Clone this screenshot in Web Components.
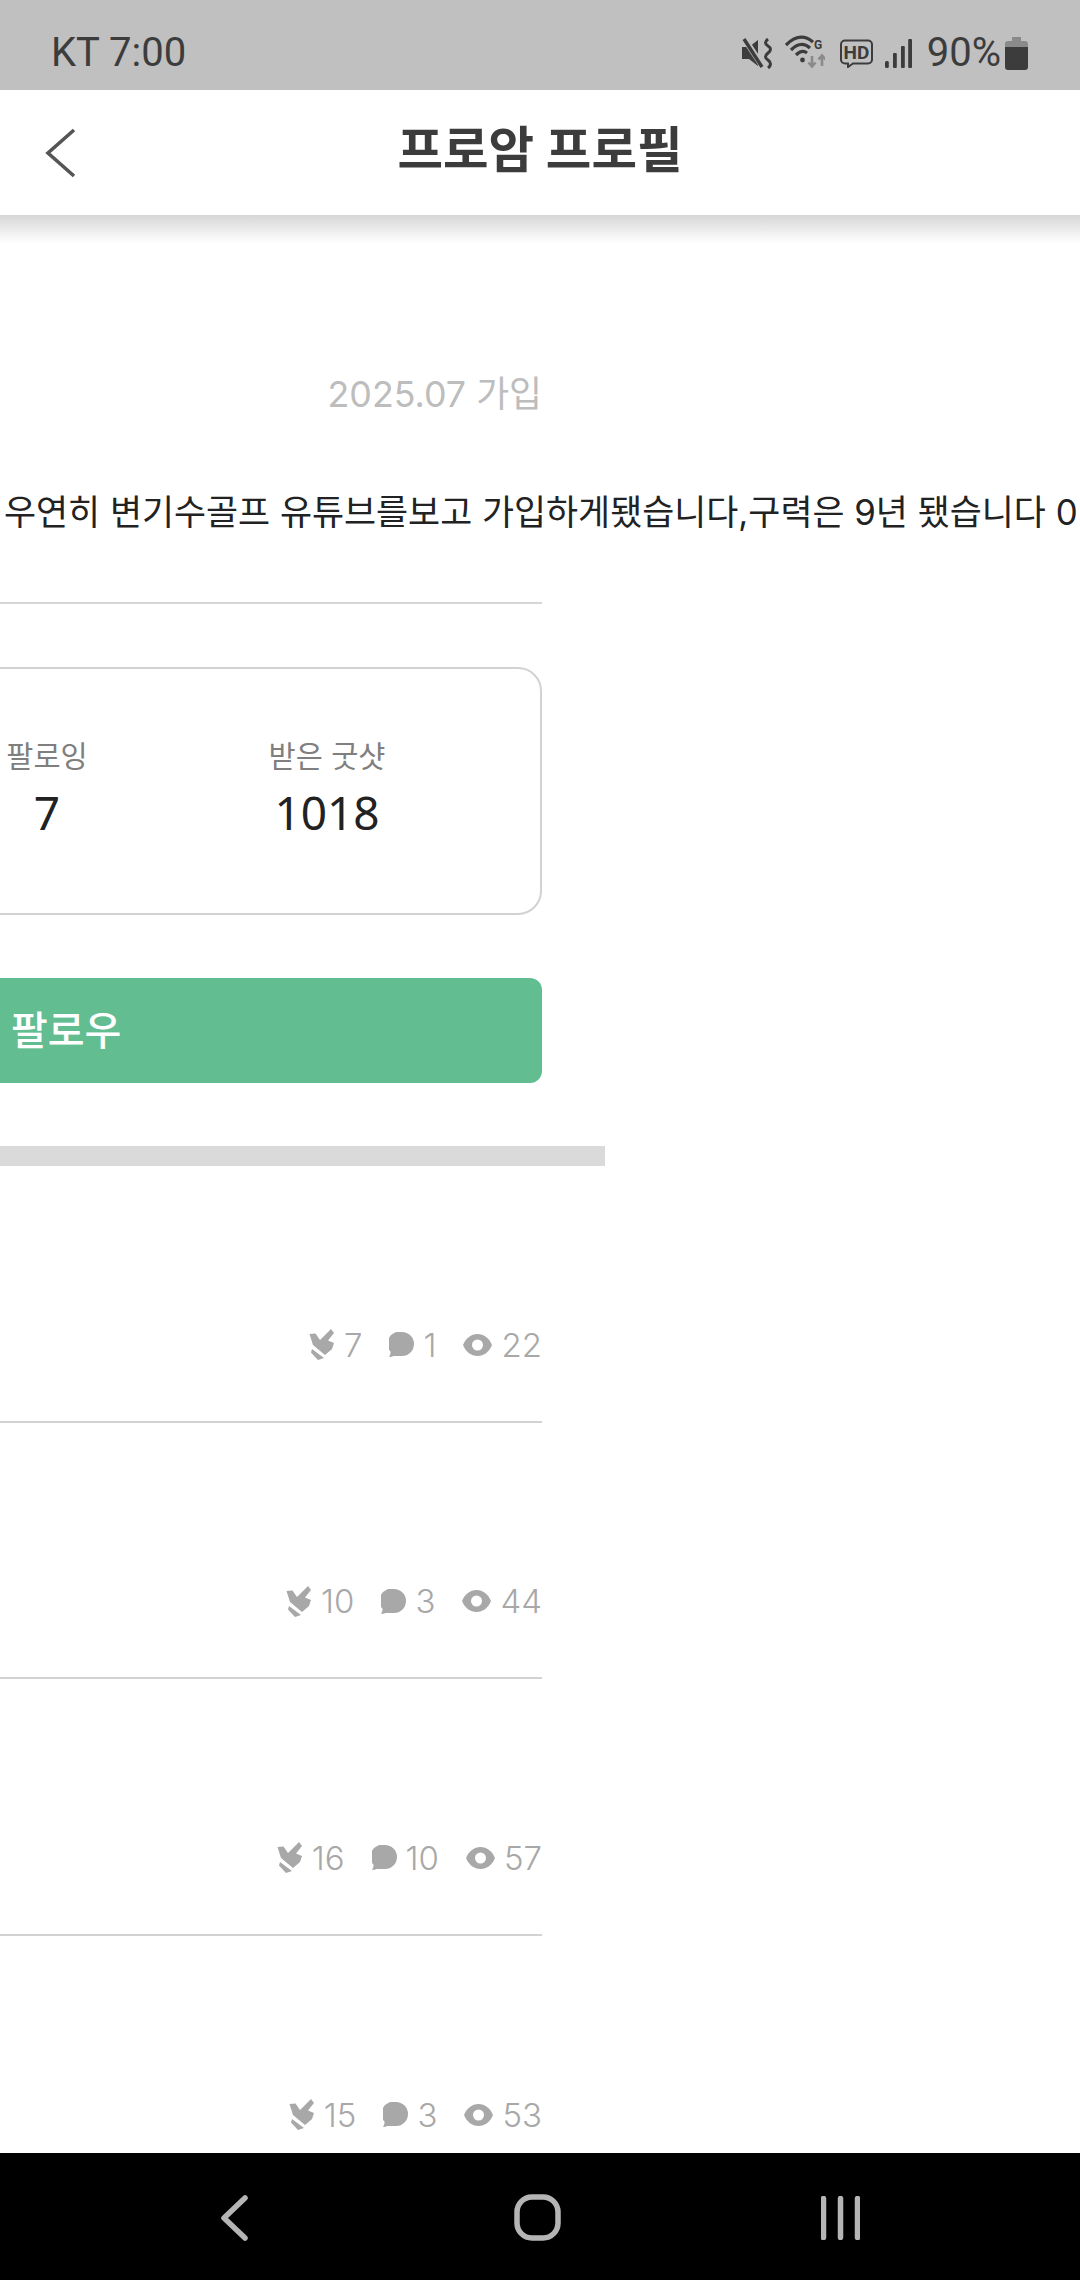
<!DOCTYPE html>
<html lang="ko">
<head>
<meta charset="utf-8">
<title>프로암 프로필</title>
<style>
  html, body { margin: 0; height: 2280px; overflow: hidden; background: #fff; }
  body {
    display: flex;
    flex-direction: column;
    font-family: Inter, "Noto Sans CJK KR", sans-serif;
  }
  main { flex: 1; min-height: 0; overflow: hidden; }
</style>
</head>
<body>
  <status-bar></status-bar>
  <app-header>프로암 프로필</app-header>
  <main>
    <profile-panel joined="2025.07 가입" bio="우연히 변기수골프 유튜브를보고 가입하게됐습니다,구력은 9년 됐습니다 0">
      <stat-card>
        <stat-item label="팔로잉" value="7"></stat-item>
        <stat-item label="받은 굿샷" value="1018"></stat-item>
      </stat-card>
      <follow-button>팔로우</follow-button>
    </profile-panel>
    <round-row shots="7" comments="1" views="22"></round-row>
    <round-row shots="10" comments="3" views="44"></round-row>
    <round-row shots="16" comments="10" views="57"></round-row>
    <round-row shots="15" comments="3" views="53"></round-row>
  </main>
  <nav-bar></nav-bar>

<script>
// Android status bar
class StatusBar extends HTMLElement {
  constructor() {
    super();
    this.attachShadow({ mode: 'open' });
  }
  connectedCallback() {
    this.shadowRoot.innerHTML = `
      <style>
        :host {
          display: flex;
          align-items: center;
          justify-content: space-between;
          height: 90px;
          padding: 16px 52px 0 51px;
          box-sizing: border-box;
          background: #c0c0c0;
          color: #3c3c3c;
          font: 400 40px/1 Roboto, sans-serif;
        }
        .icons { display: flex; align-items: center; }
        svg { display: block; flex: none; }
        .pct { margin: 0 4px 0 15px; }
      </style>
      <span>KT 7:00</span>
      <div class="icons">
        <svg width="31" height="31" viewBox="0 0 31 31" style="margin-right:12px">
          <path d="M0 9h7l9-7v26l-9-7H0z" fill="#3c3c3c"/>
          <path d="M2 0l19 29" stroke="#c0c0c0" stroke-width="6"/>
          <path d="M2 1l18 28" stroke="#3c3c3c" stroke-width="3.400"/>
          <path d="M26 1q-5 4 0 7q5 3 0 7q-5 4 0 7q5 4 0 8" fill="none" stroke="#3c3c3c" stroke-width="3"/>
        </svg>
        <svg width="40" height="36" viewBox="5 6 40 36" style="margin-right:15px">
          <path d="M6 16Q20 2 33 13" fill="none" stroke="#3c3c3c" stroke-width="3.200"/>
          <path d="M11 21Q21 11 30 19" fill="none" stroke="#3c3c3c" stroke-width="3.200"/>
          <path d="M16 26Q22 20 27 24" fill="none" stroke="#3c3c3c" stroke-width="3.200"/>
          <circle cx="22.5" cy="31" r="2.400" fill="#3c3c3c"/>
          <text x="34" y="20" font-family="Roboto, sans-serif" font-weight="700" font-size="12" fill="#3c3c3c">G</text>
          <path d="M32 27v10M28.500 33.500l3.500 4 3.500-4M42 37V27M38.500 30.500l3.500-4 3.500 4" fill="none" stroke="#8a8a8a" stroke-width="2.600"/>
        </svg>
        <svg width="34" height="29" viewBox="59 10 34 29" style="margin-right:11px">
          <path d="M64 11.500h23a4 4 0 0 1 4 4v15a4 4 0 0 1-4 4H72l-5 3.500v-3.500h-3a4 4 0 0 1-4-4v-15a4 4 0 0 1 4-4z" fill="none" stroke="#3c3c3c" stroke-width="2"/>
          <text x="75.500" y="30" text-anchor="middle" font-family="Roboto, sans-serif" font-weight="700" font-size="19" fill="#3c3c3c">HD</text>
        </svg>
        <svg width="27" height="29" viewBox="0 0 27 29">
          <rect x="0" y="22" width="3.800" height="7" rx="1.500" fill="#3c3c3c"/>
          <rect x="8" y="14" width="3.800" height="15" rx="1" fill="#3c3c3c"/>
          <rect x="16" y="7" width="3.800" height="22" rx="1" fill="#3c3c3c"/>
          <rect x="23.200" y="0" width="3.800" height="29" rx="1" fill="#3c3c3c"/>
        </svg>
        <span class="pct">90%</span>
        <svg width="23" height="33" viewBox="0 0 23 33">
          <path d="M7 0h9v4h4a3 3 0 0 1 3 3v4H0V7a3 3 0 0 1 3-3h4z" fill="#8a8a8a"/>
          <path d="M0 10h23v20a3 3 0 0 1-3 3H3a3 3 0 0 1-3-3z" fill="#3c3c3c"/>
        </svg>
      </div>
    `;
  }
}
customElements.define('status-bar', StatusBar);

// White title bar with back chevron and a soft shadow under it
class AppHeader extends HTMLElement {
  constructor() {
    super();
    this.attachShadow({ mode: 'open' });
  }
  connectedCallback() {
    this.shadowRoot.innerHTML = `
      <style>
        :host {
          display: flex;
          align-items: center;
          justify-content: center;
          position: relative;
          height: 125px;
          box-sizing: border-box;
          padding-bottom: 3px;
          background: #fff;
          color: #3c3c3c;
          font: 700 49.500px/1 Inter, "Noto Sans CJK KR", sans-serif;
        }
        svg { position: absolute; left: 43px; top: 37px; }
        :host::after {
          content: "";
          position: absolute;
          left: 0; right: 0; top: 100%;
          height: 28px;
          background: linear-gradient(#d6d6d6, #fff);
        }
      </style>
      <svg width="36" height="52" viewBox="0 0 36 52">
        <path d="M31 3L5 26l26 23" fill="none" stroke="#555" stroke-width="3.600"/>
      </svg>
      <slot></slot>
    `;
  }
}
customElements.define('app-header', AppHeader);

// Profile block; the page is scrolled sideways, so it is cut off at the left
class ProfilePanel extends HTMLElement {
  constructor() {
    super();
    this.attachShadow({ mode: 'open' });
  }
  connectedCallback() {
    this.shadowRoot.innerHTML = `
      <style>
        :host { display: block; width: 542px; }
        .joined {
          margin-top: 159px;
          text-align: right;
          font-size: 35.800px;
          line-height: 40px;
          color: #bdbdbd;
        }
        .bio {
          margin: 76px 0 68px 4px;
          font-size: 34.850px;
          line-height: 44px;
          color: #222;
          white-space: nowrap;
        }
        .rule { height: 2px; background: #d6d6d6; margin-left: -60px; }
        .gap { height: 20px; width: 605px; background: #dadada; margin-top: 63px; }
      </style>
      <div class="joined">${this.getAttribute('joined')}</div>
      <div class="bio">${this.getAttribute('bio')}</div>
      <div class="rule"></div>
      <slot></slot>
      <div class="gap"></div>
    `;
  }
}
customElements.define('profile-panel', ProfilePanel);

class StatCard extends HTMLElement {
  constructor() {
    super();
    this.attachShadow({ mode: 'open' });
  }
  connectedCallback() {
    this.shadowRoot.innerHTML = `
      <style>
        :host {
          display: flex;
          align-items: center;
          gap: 80px;
          height: 248px;
          box-sizing: border-box;
          margin: 63px 0 0 -100px;
          padding: 0 0 6px 45px;
          border: 2px solid #d2d2d2;
          border-radius: 24px;
        }
      </style>
      <slot></slot>
    `;
  }
}
customElements.define('stat-card', StatCard);

class StatItem extends HTMLElement {
  constructor() {
    super();
    this.attachShadow({ mode: 'open' });
  }
  connectedCallback() {
    this.shadowRoot.innerHTML = `
      <style>
        :host {
          display: flex;
          flex-direction: column;
          align-items: center;
          gap: 14px;
          width: 200px;
        }
        .label { font-size: 29.500px; line-height: 34px; color: #7f7f7f; }
        .value { font: 400 46px/50px "Noto Sans", sans-serif; color: #222; }
      </style>
      <div class="label">${this.getAttribute('label')}</div>
      <div class="value">${this.getAttribute('value')}</div>
    `;
  }
}
customElements.define('stat-item', StatItem);

class FollowButton extends HTMLElement {
  constructor() {
    super();
    this.attachShadow({ mode: 'open' });
  }
  connectedCallback() {
    this.shadowRoot.innerHTML = `
      <style>
        :host {
          display: flex;
          align-items: center;
          height: 105px;
          box-sizing: border-box;
          margin: 63px 0 1px -100px;
          padding: 0 0 6px 111px;
          border-radius: 12px;
          background: #62bd91;
          color: #fff;
          font-size: 40px;
          font-weight: 500;
        }
      </style>
      <slot></slot>
    `;
  }
}
customElements.define('follow-button', FollowButton);

// One list row, only the counters are in view
class RoundRow extends HTMLElement {
  constructor() {
    super();
    this.attachShadow({ mode: 'open' });
  }
  connectedCallback() {
    const shots = this.getAttribute('shots');
    const comments = this.getAttribute('comments');
    const views = this.getAttribute('views');
    this.shadowRoot.innerHTML = `
      <style>
        :host {
          display: flex;
          align-items: flex-end;
          justify-content: flex-end;
          gap: 27px;
          width: 542px;
          height: 256.670px;
          box-sizing: border-box;
          padding-bottom: 56px;
          border-bottom: 2px solid #d2d2d2;
          color: #a8a8a8;
          font-size: 33px;
          font-weight: 300;
          line-height: 40px;
        }
        .item { display: flex; align-items: center; gap: 9px; }
        svg { display: block; flex: none; }
      </style>
      <div class="item">
        <svg width="26" height="33" viewBox="6 4 26 33" fill="#a8a8a8">
          <path d="M6.500 10l6-.5 4.500 6.500L28 5l3 4-6 7.500 6 2.500-2 6-7 6-12-10z"/>
          <path d="M9 25l12 9-6 2-7-7.500z"/>
        </svg>
        <span>${shots}</span>
      </div>
      <div class="item">
        <svg width="25" height="25" viewBox="0 0 24 24" fill="#a8a8a8">
          <path d="M12.500 0A11.500 11.500 0 0 1 12.500 23C10 23 7 23 4.500 23 3 23.500 1.500 24 0 24c1-1.500 1.500-3 1.500-5A11.500 11.500 0 0 1 12.500 0z"/>
        </svg>
        <span>${comments}</span>
      </div>
      <div class="item">
        <svg width="29" height="22" viewBox="0 0 29 22">
          <path d="M0 11C3 4 8 0 14.500 0S26 4 29 11c-3 7-8 11-14.500 11S3 18 0 11z" fill="#a8a8a8"/>
          <circle cx="14.500" cy="11" r="5.500" fill="#fff"/>
        </svg>
        <span>${views}</span>
      </div>
    `;
  }
}
customElements.define('round-row', RoundRow);

// Android three button navigation
class NavBar extends HTMLElement {
  constructor() {
    super();
    this.attachShadow({ mode: 'open' });
  }
  connectedCallback() {
    this.shadowRoot.innerHTML = `
      <style>
        :host {
          display: flex;
          align-items: center;
          height: 127px;
          box-sizing: border-box;
          padding: 2px 0 0 221px;
          background: #000;
        }
        svg { display: block; flex: none; }
      </style>
      <svg width="27" height="46" viewBox="0 0 27 46" style="margin-right:266px">
        <path d="M24 3L3 23l21 20" fill="none" stroke="#b5b5b5" stroke-width="5.500" stroke-linecap="round" stroke-linejoin="round"/>
      </svg>
      <svg width="47" height="47" viewBox="0 0 47 47" style="margin-right:260px">
        <rect x="3" y="3" width="41" height="41" rx="15" fill="none" stroke="#b5b5b5" stroke-width="5.500"/>
      </svg>
      <svg width="39" height="44" viewBox="0 0 39 44">
        <path d="M2.500 2.500v39M19.500 2.500v39M36.500 2.500v39" fill="none" stroke="#b5b5b5" stroke-width="5.500" stroke-linecap="round"/>
      </svg>
    `;
  }
}
customElements.define('nav-bar', NavBar);
</script>
</body>
</html>
